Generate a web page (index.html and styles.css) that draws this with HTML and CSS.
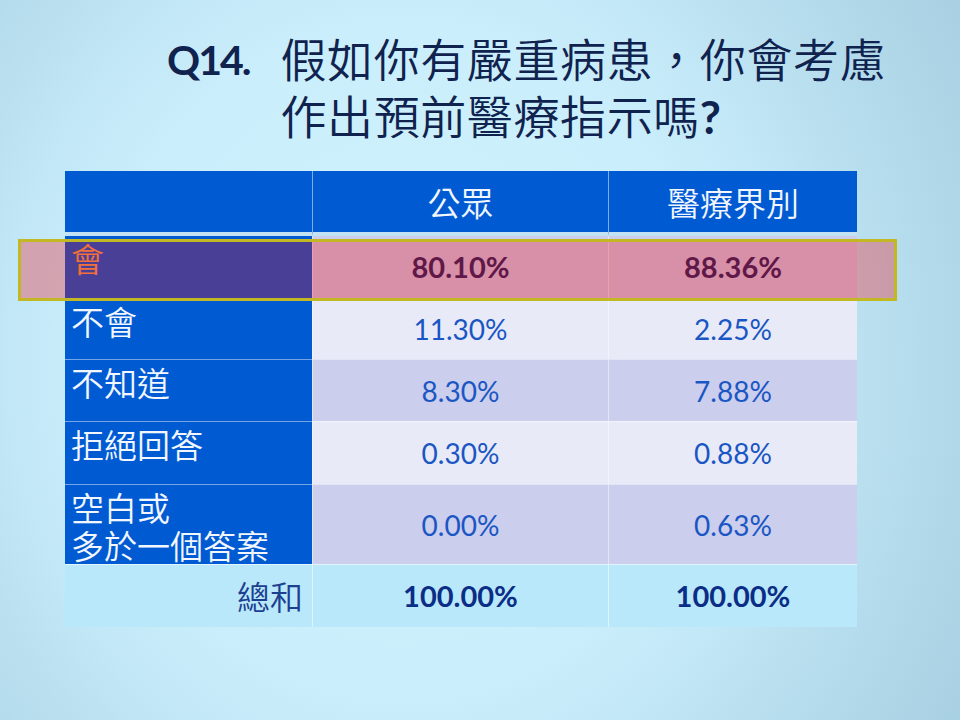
FILE: index.html
```html
<!DOCTYPE html>
<html lang="zh-Hant">
<head>
<meta charset="utf-8">
<title>Q14</title>
<link rel="stylesheet" href="styles.css">
</head>
<body>
<main class="slide">
  <h1 class="title">
    <span class="qnum">Q14.</span>
    <span class="qtext">
      <span class="tline">假如你有嚴重病患，你會考慮</span>
      <span class="tline">作出預前醫療指示嗎<b class="qmark">?</b></span>
    </span>
  </h1>

  <div class="table">
    <div class="cell head label"></div>
    <div class="cell head">公眾</div>
    <div class="cell head">醫療界別</div>

    <div class="cell label first hl-label">會</div>
    <div class="cell dark first num bold hl">80.10%</div>
    <div class="cell dark first num bold hl">88.36%</div>

    <div class="cell label">不會</div>
    <div class="cell light num">11.30%</div>
    <div class="cell light num">2.25%</div>

    <div class="cell label">不知道</div>
    <div class="cell dark num">8.30%</div>
    <div class="cell dark num">7.88%</div>

    <div class="cell label">拒絕回答</div>
    <div class="cell light num">0.30%</div>
    <div class="cell light num">0.88%</div>

    <div class="cell label"><span class="lline">空白或</span><span class="lline">多於一個答案</span></div>
    <div class="cell dark num">0.00%</div>
    <div class="cell dark num">0.63%</div>

    <div class="cell total total-label">總和</div>
    <div class="cell total num total-num">100.00%</div>
    <div class="cell total num total-num">100.00%</div>
  </div>

  <div class="highlight"></div>
</main>
</body>
</html>
```
FILE: styles.css
```css
html, body {
  margin: 0;
  padding: 0;
}

.slide {
  position: relative;
  width: 960px;
  height: 720px;
  box-sizing: border-box;
  padding-top: 29px;
  overflow: hidden;
  background: radial-gradient(ellipse 75% 110% at 42% 50%,
      #d0f2fd 0%, #caeefb 42%, #c2e7f6 55%, #aed6e7 80%, #9fc8dc 105%);
}

.title {
  display: flex;
  align-items: flex-start;
  gap: 31px;
  margin: 0 0 28px 167px;
  font-weight: normal;
  color: #10234f;
}

.qnum {
  font-family: Lato, "Liberation Sans", sans-serif;
  font-weight: 700;
  font-size: 41px;
  line-height: 57px;
  letter-spacing: -2px;
  padding-top: 2px;
}

.qtext {
  display: flex;
  flex-direction: column;
  font-family: "Noto Sans CJK TC", sans-serif;
  font-weight: 350;
  font-size: 46px;
  letter-spacing: 0.6px;
}

.tline {
  display: block;
  height: 57px;
  line-height: 57px;
  white-space: nowrap;
}

.qmark {
  font-family: Lato, "Liberation Sans", sans-serif;
  font-weight: 700;
}

.table {
  display: grid;
  grid-template-columns: 247px 296px 249px;
  grid-template-rows: 65px 62px 61px 62px 63px 80px 63px;
  margin-left: 65px;
  width: 792px;
}

.cell {
  box-sizing: border-box;
  border-top: 1px solid rgba(255, 255, 255, 0.45);
  font-family: "Noto Sans CJK TC", sans-serif;
  font-weight: 350;
  font-size: 33px;
  line-height: 38px;
}

.cell:not(.label):not(.total-label) {
  border-left: 1px solid rgba(255, 255, 255, 0.5);
}

.head {
  border-top: none;
  border-bottom: 4px solid #c3e2f4;
  background: #005bd3;
  color: #f2f6ff;
  display: flex;
  align-items: center;
  justify-content: center;
}

.head.label {
  border-left: none;
}

.first {
  border-top: none;
}

.label {
  background: #005bd3;
  color: #f2f6ff;
  padding: 3px 0 0 6px;
}

.label.first {
  border-top: none;
}

.lline {
  display: block;
  height: 38px;
  white-space: nowrap;
}

.hl-label {
  color: #f0a050;
}

.light {
  background: #e8ebf7;
}

.dark {
  background: #cbceec;
}

.num {
  display: flex;
  align-items: center;
  justify-content: center;
  font-family: Lato, "Liberation Sans", sans-serif;
  font-weight: 400;
  font-size: 28px;
  color: #1a56c4;
}

.bold {
  font-weight: 700;
  font-size: 29px;
}

.hl {
  color: #1e2464;
}

.total {
  background: #b8e8fa;
  border-top: 1px solid rgba(255, 255, 255, 0.6);
}

.total-label {
  display: flex;
  align-items: center;
  justify-content: flex-end;
  padding-right: 9px;
  color: #1d3f8f;
}

.total-num {
  font-weight: 700;
  font-size: 29px;
  color: #0b2d86;
}

.highlight {
  position: absolute;
  left: 18px;
  top: 239px;
  width: 879px;
  height: 62px;
  box-sizing: border-box;
  border: 3px solid #c2b823;
  background: rgba(245, 0, 10, 0.3);
  pointer-events: none;
}
```
